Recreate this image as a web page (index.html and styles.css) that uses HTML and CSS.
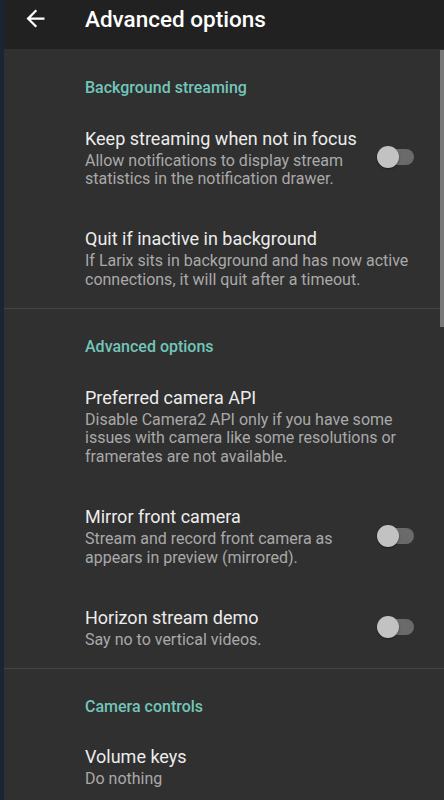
FILE: index.html
```html
<!DOCTYPE html>
<html lang="en">
<head>
  <meta charset="UTF-8">
  <meta name="viewport" content="width=device-width, initial-scale=1">
  <title>Advanced options</title>
  <link rel="stylesheet" href="styles.css">
</head>
<body>
  <div class="edge"></div>
  <div class="screen">
    <div class="toolbar">
      <svg class="back" viewBox="0 0 24 24" width="27" height="27">
        <path fill="#fff" d="M20 11H7.83l5.59-5.59L12 4l-8 8 8 8 1.41-1.41L7.83 13H20v-2z"/>
      </svg>
      <h1 class="title">Advanced options</h1>
    </div>

    <div class="list">
      <div class="section">
        <div class="section-title">Background streaming</div>
        <div class="pref">
          <div class="pref-text">
            <div class="pref-title">Keep streaming when not in focus</div>
            <div class="pref-summary">Allow notifications to display stream statistics in the notification drawer.</div>
          </div>
          <span class="switch"></span>
        </div>
        <div class="pref">
          <div class="pref-text">
            <div class="pref-title">Quit if inactive in background</div>
            <div class="pref-summary">If Larix sits in background and has now active connections, it will quit after a timeout.</div>
          </div>
        </div>
      </div>

      <div class="section">
        <div class="section-title">Advanced options</div>
        <div class="pref">
          <div class="pref-text">
            <div class="pref-title">Preferred camera API</div>
            <div class="pref-summary">Disable Camera2 API only if you have some issues with camera like some resolutions or framerates are not available.</div>
          </div>
        </div>
        <div class="pref">
          <div class="pref-text">
            <div class="pref-title">Mirror front camera</div>
            <div class="pref-summary">Stream and record front camera as appears in preview (mirrored).</div>
          </div>
          <span class="switch"></span>
        </div>
        <div class="pref">
          <div class="pref-text">
            <div class="pref-title">Horizon stream demo</div>
            <div class="pref-summary">Say no to vertical videos.</div>
          </div>
          <span class="switch"></span>
        </div>
      </div>

      <div class="section">
        <div class="section-title">Camera controls</div>
        <div class="pref">
          <div class="pref-text">
            <div class="pref-title">Volume keys</div>
            <div class="pref-summary">Do nothing</div>
          </div>
        </div>
      </div>
    </div>

    <div class="scrollbar"></div>
  </div>
</body>
</html>
```

FILE: styles.css
```css
*{
  margin: 0;
  padding: 0;
  box-sizing: border-box;
}

body{
  display: flex;
  height: 800px;
  overflow: hidden;
  background: #303030;
  font-family: Roboto, "Noto Sans", sans-serif;
}

.edge{
  width: 4px;
  flex: none;
  background: #1a2433;
}

.screen{
  position: relative;
  flex: 1;
  overflow: hidden;
}

.toolbar{
  display: flex;
  align-items: flex-start;
  height: 49px;
  padding-left: 17.5px;
  background: #212121;
}

.back{
  display: block;
  margin-top: 4.5px;
  margin-right: 36.5px;
}

.title{
  margin-top: 6px;
  font-size: 22.5px;
  font-weight: 500;
  line-height: 26px;
  color: #fff;
}

.list{
  padding-top: 1px;
}

.section{
  border-bottom: 1px solid #464646;
}

.section:last-child{
  border-bottom: none;
}

.section-title{
  padding: 28px 0 9px 81px;
  font-size: 16px;
  font-weight: 500;
  line-height: 20px;
  color: #72c6b9;
}

.pref{
  display: flex;
  align-items: center;
  padding: 18.5px 14px 18.5px 81px;
}

.pref-text{
  flex: 1;
}

.pref-title{
  font-size: 18px;
  line-height: 26px;
  color: #ececec;
}

.pref-summary{
  font-size: 16px;
  line-height: 18.8px;
  color: #a9a9a9;
}

.switch{
  position: relative;
  flex: none;
  width: 34px;
  height: 16px;
  margin: 0 16px 0 18px;
  border-radius: 8px;
  background: #6a6a6a;
}

.switch::before{
  content: "";
  position: absolute;
  left: -3px;
  top: -3px;
  width: 22px;
  height: 22px;
  border-radius: 50%;
  background: #c2c2c2;
  box-shadow: 0 1px 2px rgba(0,0,0,0.45);
}

.scrollbar{
  position: absolute;
  right: 0;
  top: 50px;
  width: 4px;
  height: 277px;
  background: #787878;
}
```
